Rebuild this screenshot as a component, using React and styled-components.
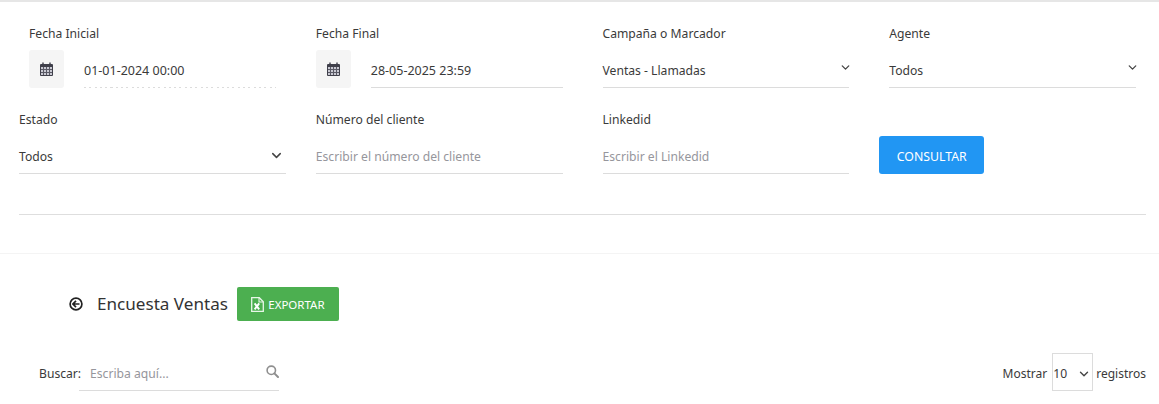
import React from "react";
import styled, { createGlobalStyle } from "styled-components";
import { LuChevronDown } from "react-icons/lu";

const Global = createGlobalStyle`
  html, body { margin: 0; padding: 0; background: #fff; }
  body { font-family: "Noto Sans", "Open Sans", sans-serif; font-size: 12.15px; color: #333; overflow: hidden; }
  * { box-sizing: border-box; }
`;

const Page = styled.div`
  width: 1159px;
  height: 404px;
  overflow: hidden;
  border-top: 2px solid #e6e6e6;
`;

const Filters = styled.section`
  padding: 21px 13px 0 9px;
  height: 252px;
  border-bottom: 1px solid #f4f4f4;
`;

const Grid = styled.div`
  display: grid;
  grid-template-columns: repeat(4, 286.75px);
  row-gap: 21px;
`;

const Cell = styled.div`
  padding: 0 ${(p) => p.$pad ?? 20}px;
  min-width: 0;
`;

const Label = styled.div`
  height: 20px;
  line-height: 22px;
  margin-bottom: 7px;
  color: #3a3a3a;
`;

const FieldRow = styled.div`
  display: flex;
  height: 38px;
`;

const IconBox = styled.div`
  width: 35px;
  height: 38px;
  flex: none;
  background: #f5f5f5;
  border-radius: 3px;
  display: flex;
  align-items: center;
  justify-content: center;
  margin-right: 20px;
`;

const Field = styled.div`
  flex: 1;
  height: 38px;
  padding-top: 3px;
  display: flex;
  align-items: center;
  justify-content: space-between;
  border-bottom: ${(p) => (p.$dotted ? "0" : "1px solid #dcdcdc")};
  color: ${(p) => (p.$muted ? "#96969c" : "#3a3a3a")};
  font-size: ${(p) => (p.$date ? "12.5px" : "inherit")};
  white-space: nowrap;
  ${(p) =>
    p.$dotted &&
    `background: repeating-linear-gradient(90deg, #dcdcdc 0 2px, transparent 2px 5.3px) left bottom / 100% 1px no-repeat;`}
`;

const Arrow = styled(LuChevronDown)`
  color: #444;
  flex: none;
  margin-right: ${(p) => p.$right ?? 0}px;
  margin-top: ${(p) => p.$top ?? 0}px;
  stroke-width: 2.4;
`;

const Consult = styled.button`
  display: block;
  margin-top: 27px;
  width: 105px;
  height: 38px;
  padding: 2px 0 0;
  background: #2196f3;
  color: #fff;
  border: 0;
  border-radius: 3px;
  font: inherit;
  font-size: 12.3px;
`;

const Divider = styled.hr`
  margin: 40px 0 0 10px;
  border: 0;
  border-top: 1px solid #dedede;
`;

const Results = styled.section`
  padding: 33px 13px 0 39px;
`;

const TitleRow = styled.div`
  display: flex;
  align-items: center;
  height: 34px;
  padding-left: 30px;
`;

const BackIcon = styled.svg`
  width: 14px;
  height: 14px;
  margin-right: 14px;
  flex: none;
`;

const Title = styled.h2`
  margin: -2px 9px 0 0;
  font-size: 17.1px;
  font-weight: 400;
  color: #333;
`;

const Export = styled.button`
  width: 102px;
  height: 34px;
  padding: 0;
  background: #4caf50;
  color: #fff;
  border: 0;
  border-radius: 2px;
  font: inherit;
  font-size: 11.5px;
  display: flex;
  align-items: center;
  justify-content: center;
  gap: 4px;
`;

const ControlsRow = styled.div`
  display: flex;
  justify-content: space-between;
  align-items: center;
  margin-top: 32px;
  height: 38px;
`;

const SearchGroup = styled.div`
  display: flex;
  align-items: center;
  height: 38px;
`;

const SearchLabel = styled.span`
  width: 40px;
  padding-top: 3px;
  color: #3a3a3a;
`;

const SearchBox = styled.div`
  width: 200px;
  height: 38px;
  padding: 3px 0 0 11px;
  display: flex;
  align-items: center;
  justify-content: space-between;
  border-bottom: 1px solid #dcdcdc;
  color: #96969c;
`;

const SearchIcon = styled.svg`
  width: 13px;
  height: 13px;
  margin-top: -4px;
  flex: none;
`;

const Text = styled.span`
  color: #3a3a3a;
  padding-top: 3px;
  font-size: 12px;
`;

const PageSize = styled.div`
  width: 41px;
  height: 38px;
  margin: 0 3px 0 5px;
  border: 1px solid #dcdcdc;
  display: flex;
  align-items: center;
  justify-content: space-between;
  padding: 3px 1.5px 0 0;
  color: #3a3a3a;
`;

const PagerGroup = styled.div`
  display: flex;
  align-items: center;
`;

const CalendarIcon = () => (
  <svg width="13" height="14" viewBox="0 0 13 14" aria-hidden="true">
    <path d="M1 2h11a1 1 0 0 1 1 1v10a1 1 0 0 1-1 1H1a1 1 0 0 1-1-1V3a1 1 0 0 1 1-1z" fill="#3f3f4a" />
    <rect x="1" y="5" width="11" height="8" fill="#c9c9d2" />
    <path d="M3.5 5v8M6.5 5v8M9.5 5v8M1 7.5h11M1 10.5h11" stroke="#5a5a66" strokeWidth="1" fill="none" />
    <path d="M3 0.5v2.5M10 0.5v2.5" stroke="#3f3f4a" strokeWidth="1.4" />
  </svg>
);

const ExcelIcon = () => (
  <svg width="13" height="15" viewBox="0 0 13 15" aria-hidden="true">
    <path d="M0.7 0.7h7.6l4 4v9.6H0.7z" fill="none" stroke="#e8f6e8" strokeWidth="1.3" />
    <path d="M8 1v4h4" fill="none" stroke="#e8f6e8" strokeWidth="1.1" />
    <path d="M3.6 6.4l4.6 6M8.2 6.4l-4.6 6" stroke="#fff" strokeWidth="1.9" fill="none" />
  </svg>
);

export default function App() {
  return (
    <Page>
      <Global />
      <Filters>
        <Grid>
          <Cell>
            <Label>Fecha Inicial</Label>
            <FieldRow>
              <IconBox><CalendarIcon /></IconBox>
              <Field $dotted $date>01-01-2024 00:00</Field>
            </FieldRow>
          </Cell>
          <Cell>
            <Label>Fecha Final</Label>
            <FieldRow>
              <IconBox><CalendarIcon /></IconBox>
              <Field $date>28-05-2025 23:59</Field>
            </FieldRow>
          </Cell>
          <Cell>
            <Label>Campaña o Marcador</Label>
            <Field>Ventas - Llamadas<Arrow size={13} $top={-6} $right={-3} /></Field>
          </Cell>
          <Cell>
            <Label>Agente</Label>
            <Field>Todos<Arrow size={13} $top={-6} $right={-3} /></Field>
          </Cell>
          <Cell $pad={10}>
            <Label>Estado</Label>
            <Field>Todos<Arrow size={15} $right={2} $top={-2} /></Field>
          </Cell>
          <Cell>
            <Label>Número del cliente</Label>
            <Field $muted>Escribir el número del cliente</Field>
          </Cell>
          <Cell>
            <Label>Linkedid</Label>
            <Field $muted>Escribir el Linkedid</Field>
          </Cell>
          <Cell $pad={10}>
            <Consult>CONSULTAR</Consult>
          </Cell>
        </Grid>
        <Divider />
      </Filters>
      <Results>
        <TitleRow>
          <BackIcon viewBox="0 0 14 14" aria-hidden="true">
            <circle cx="7" cy="7" r="5.9" fill="none" stroke="#222" strokeWidth="1.7" />
            <path d="M3.6 7h6.9M7 3.9L3.9 7 7 10.1" fill="none" stroke="#222" strokeWidth="1.7" />
          </BackIcon>
          <Title>Encuesta Ventas</Title>
          <Export><ExcelIcon />EXPORTAR</Export>
        </TitleRow>
        <ControlsRow>
          <SearchGroup>
            <SearchLabel>Buscar:</SearchLabel>
            <SearchBox>
              Escriba aquí...
              <SearchIcon viewBox="0 0 13 13" aria-hidden="true">
                <circle cx="5.3" cy="5.3" r="4.2" fill="none" stroke="#8f8f8f" strokeWidth="1.6" />
                <path d="M8.4 8.4l3.6 3.6" stroke="#8f8f8f" strokeWidth="2" strokeLinecap="round" />
              </SearchIcon>
            </SearchBox>
          </SearchGroup>
          <PagerGroup>
            <Text>Mostrar</Text>
            <PageSize>10<Arrow size={14} /></PageSize>
            <Text>registros</Text>
          </PagerGroup>
        </ControlsRow>
      </Results>
    </Page>
  );
}
